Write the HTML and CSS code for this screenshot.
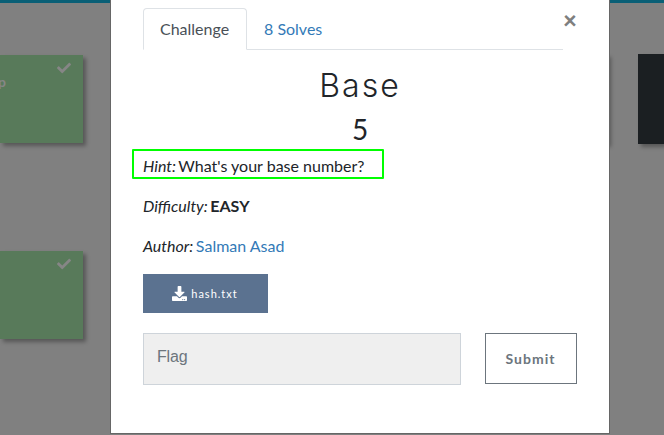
FILE: index.html
```html
<!DOCTYPE html>
<html lang="en">
<head>
<meta charset="utf-8">
<title>Base</title>
<link rel="stylesheet" href="styles.css">
</head>
<body>
<div class="page">
  <div class="navbar-edge"></div>
  <div class="board">
    <div class="card solved"><svg class="check" viewBox="0 0 512 512"><path d="M173.9 439.4l-166.4-166.4c-10-10-10-26.2 0-36.2l36.2-36.2c10-10 26.2-10 36.2 0L192 312.7 432.1 72.6c10-10 26.2-10 36.2 0l36.2 36.2c10 10 10 26.2 0 36.2L210.1 439.4c-10 10-26.2 10-36.2 0z"/></svg><span class="card-name">p</span></div>
    <div class="card dark"></div>
    <div class="card dark"></div>
    <div class="card solved"><svg class="check" viewBox="0 0 512 512"><path d="M173.9 439.4l-166.4-166.4c-10-10-10-26.2 0-36.2l36.2-36.2c10-10 26.2-10 36.2 0L192 312.7 432.1 72.6c10-10 26.2-10 36.2 0l36.2 36.2c10 10 10 26.2 0 36.2L210.1 439.4c-10 10-26.2 10-36.2 0z"/></svg></div>
  </div>
</div>
<div class="modal" role="dialog">
  <button class="close" aria-label="Close">×</button>
  <nav class="tabs">
    <a class="tab active">Challenge</a>
    <a class="tab">8 Solves</a>
  </nav>
  <h2 class="title">Base</h2>
  <h3 class="points">5</h3>
  <div class="description">
    <p class="hint"><em>Hint:</em> What's your base number?</p>
    <p><em>Difficulty:</em> <strong>EASY</strong></p>
    <p><em>Author:</em> <a class="link">Salman Asad</a></p>
  </div>
  <a class="file"><svg class="download" viewBox="0 0 512 512"><path d="M216 0h80c13.300 0 24 10.700 24 24v168h87.700c17.800 0 26.700 21.500 14.100 34.100L269.700 378.300c-7.500 7.500-19.800 7.500-27.300 0L90.100 226.100c-12.600-12.600-3.700-34.100 14.100-34.100H192V24c0-13.300 10.700-24 24-24zm296 376v112c0 13.300-10.700 24-24 24H24c-13.300 0-24-10.700-24-24V376c0-13.300 10.700-24 24-24h146.700l49 49c20.100 20.100 52.500 20.100 72.600 0l49-49H488c13.300 0 24 10.700 24 24zm-124 88c0-11-9-20-20-20s-20 9-20 20 9 20 20 20 20-9 20-20zm64 0c0-11-9-20-20-20s-20 9-20 20 9 20 20 20 20-9 20-20z"/></svg><span>hash.txt</span></a>
  <div class="answer">
    <input class="flag" placeholder="Flag">
    <button class="submit">Submit</button>
  </div>
</div>
</body>
</html>
```
FILE: styles.css
```css
* { box-sizing: border-box; }
body {
  margin: 0;
  height: 435px;
  overflow: hidden;
  background: #808080;
  color: #212529;
  font: 16px/24px Lato, "Liberation Sans", sans-serif;
}
.navbar-edge { height: 3px; background: #095f76; }
.board {
  display: grid;
  grid-template-columns: 83px 495px 26px;
  grid-template-rows: 90px 90px;
  gap: 106px 30px;
  padding-top: 51px;
}
.card { box-shadow: 3px 3px 4px rgba(0, 0, 0, .32); }
.dark { background: #1b1f22; }
.solved {
  display: flex;
  flex-direction: column;
  height: 88px;
  margin-top: 1px;
  background: #587a5a;
  color: #868686;
}
.check {
  align-self: flex-end;
  width: 14px;
  height: 14px;
  margin: 6px 12px 0 0;
  fill: #868686;
}
.card-name { margin: -5px 0 0 -2px; font-weight: 700; font-size: 14px; }
.modal {
  position: absolute;
  top: -30px;
  left: 110px;
  width: 500px;
  height: 464px;
  padding: 32px 32px 0;
  border: 1px solid #666;
  background: #fff;
}
.close {
  position: absolute;
  top: 37px;
  right: 32px;
  padding: 0;
  border: 0;
  background: none;
  color: #7f7f7f;
  font: 900 24px/24px Lato, sans-serif;
}
.tabs {
  display: flex;
  width: 420px;
  margin-top: 5px;
  border-bottom: 1px solid #dee2e6;
}
.tab {
  height: 42px;
  margin-bottom: -1px;
  padding: 8px 16px;
  border: 1px solid transparent;
  border-radius: 4px 4px 0 0;
  color: #337ab7;
}
.active {
  width: 104px;
  border-color: #dee2e6 #dee2e6 #fff;
  background: #fff;
  color: #495057;
}
.title {
  margin: 16px 0 0;
  font: 300 32px/40px Inter, "Open Sans", sans-serif;
  letter-spacing: 2px;
  text-align: center;
}
.points {
  margin: 6px 0 0;
  font: 400 28px/34px Lato, sans-serif;
  text-align: center;
}
.description { margin-top: 3px; }
.description p { margin: 0 0 16px; }
.description em { margin-right: -1.5px; }
.description .hint {
  width: 252px;
  margin: 0 0 15px -11px;
  padding: 2px 9px;
  border: 2px solid #0f0;
  border-radius: 1px;
  height: 30px;
  line-height: 26px;
}
.link { color: #337ab7; }
.file {
  display: flex;
  align-items: center;
  justify-content: center;
  gap: 4px;
  width: 125px;
  height: 39px;
  padding-right: 1px;
  background: #5b7290;
  color: #fff;
  font-size: 11px;
  letter-spacing: 1px;
}
.download { width: 15px; height: 15px; fill: #fff; }
.answer { display: flex; gap: 24px; margin-top: 20px; }
.flag {
  width: 318px;
  height: 52px;
  padding: 0 13px 5px;
  border: 1px solid #ced4da;
  border-radius: 0;
  background: #efefef;
  font: 16px "Liberation Sans", sans-serif;
  letter-spacing: -.2px;
}
.flag::placeholder { color: #6c757d; }
.submit {
  width: 92px;
  height: 51px;
  padding: 0 1px 0 0;
  border: 1px solid #6c757d;
  background: #fff;
  color: #6c757d;
  font: 700 14px Lato, sans-serif;
  letter-spacing: 1px;
}
```
